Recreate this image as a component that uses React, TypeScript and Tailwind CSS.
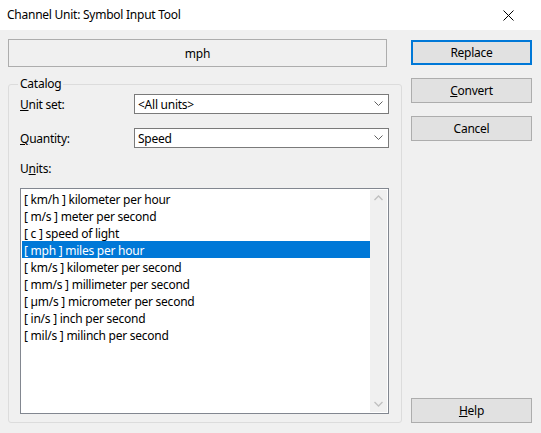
import React from "react";

const F = { fontFamily: '"Segoe UI", "Noto Sans", sans-serif', letterSpacing: "-0.25px" };

function Chevron() {
  return (
    <svg width="9" height="6" viewBox="0 0 9 6" className="mr-[5px]">
      <path d="M0.5 0.5 L4.5 4.5 L8.5 0.5" fill="none" stroke="#606060" strokeWidth="1" />
    </svg>
  );
}

function Combo({ value }: { value: string }) {
  return (
    <div className="w-[255px] h-[20px] border border-[#7a7a7a] bg-white flex items-center justify-between">
      <span className="pl-[3px] leading-[18px] pt-[1px]">{value}</span>
      <Chevron />
    </div>
  );
}

function Btn({ children, focused }: { children: React.ReactNode; focused?: boolean }) {
  return (
    <div
      className={
        "w-[121px] h-[25px] bg-[#e1e1e1] flex items-center justify-center pt-[1px] " +
        (focused ? "border-2 border-[#0078d7]" : "border border-[#adadad]")
      }
    >
      {children}
    </div>
  );
}

const items = [
  "[ km/h ] kilometer per hour",
  "[ m/s ] meter per second",
  "[ c ] speed of light",
  "[ mph ] miles per hour",
  "[ km/s ] kilometer per second",
  "[ mm/s ] millimeter per second",
  "[ µm/s ] micrometer per second",
  "[ in/s ] inch per second",
  "[ mil/s ] milinch per second",
];

export default function App() {
  return (
    <div style={F} className="w-[541px] h-[433px] bg-[#f0f0f0] flex flex-col text-[12px] text-black overflow-hidden">
      <div className="h-[30px] bg-white flex items-center justify-between shrink-0">
        <span className="pl-[7px] text-[12px]">Channel Unit: Symbol Input Tool</span>
        <svg width="11" height="11" viewBox="0 0 11 11" className="mr-[27px]">
          <path d="M0.5 0.5 L10.5 10.5 M10.5 0.5 L0.5 10.5" stroke="#000" strokeWidth="1" />
        </svg>
      </div>
      <div className="flex flex-1">
        <div className="w-[393px] ml-[8px] flex flex-col">
          <div className="mt-[9px] w-[379px] h-[28px] border border-[#adadad] bg-[#f0f0f0] flex items-center justify-center pt-[2px]">
            mph
          </div>
          <fieldset className="mt-[10px] w-[393px] h-[346px] border border-[#dcdcdc] rounded-[3px] pl-[11px] pr-[12px]">
            <legend className="-ml-[2px] px-[2px] leading-[14px]">Catalog</legend>
            <div className="flex items-center mt-[3px]">
              <span className="w-[114px] pt-[1px]">
                <u>U</u>nit set:
              </span>
              <Combo value="<All units>" />
            </div>
            <div className="flex items-center mt-[14px]">
              <span className="w-[114px] pt-[1px]">
                <u>Q</u>uantity:
              </span>
              <Combo value="Speed" />
            </div>
            <div className="mt-[13px] leading-[16px]">
              U<u>n</u>its:
            </div>
            <div className="mt-[11px] w-[369px] h-[226px] border border-[#828790] bg-white flex p-[1px]">
              <div className="flex-1 flex flex-col">
                {items.map((t, i) => (
                  <div
                    key={t}
                    className={
                      "h-[17px] leading-[17px] pl-[2px] pt-[1px] " + (i === 3 ? "bg-[#0078d7] text-white" : "")
                    }
                  >
                    {t}
                  </div>
                ))}
              </div>
              <div className="w-[17px] bg-[#f0f0f0] flex flex-col justify-between items-center py-[5px]">
                <svg width="9" height="6" viewBox="0 0 9 6">
                  <path d="M0.5 5 L4.5 1 L8.5 5" fill="none" stroke="#c0c0c0" strokeWidth="1.3" />
                </svg>
                <svg width="9" height="6" viewBox="0 0 9 6">
                  <path d="M0.5 1 L4.5 5 L8.5 1" fill="none" stroke="#c0c0c0" strokeWidth="1.3" />
                </svg>
              </div>
            </div>
          </fieldset>
        </div>
        <div className="ml-[10px] flex flex-col pt-[10px]">
          <Btn focused>Replace</Btn>
          <div className="mt-[13px]">
            <Btn>
              <span>
                <u>C</u>onvert
              </span>
            </Btn>
          </div>
          <div className="mt-[13px]">
            <Btn>Cancel</Btn>
          </div>
          <div className="mt-auto mb-[10px]">
            <Btn>
              <span>
                <u>H</u>elp
              </span>
            </Btn>
          </div>
        </div>
      </div>
    </div>
  );
}
